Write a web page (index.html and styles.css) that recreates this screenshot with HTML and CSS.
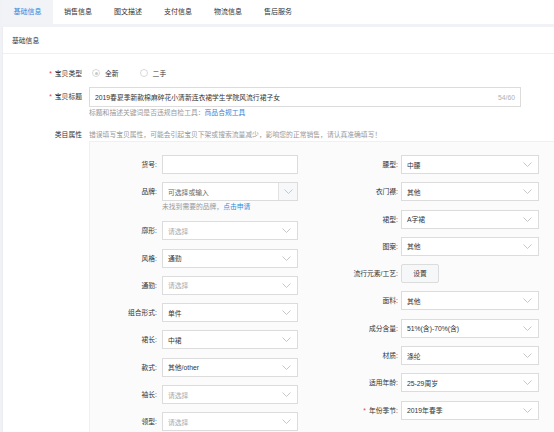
FILE: index.html
```html
<!DOCTYPE html>
<html lang="zh-CN">
<head>
<meta charset="utf-8">
<title>基础信息</title>
<link rel="stylesheet" href="styles.css">
</head>
<body>
<div class="page">
  <div class="tabs">
    <div class="tab active">基础信息</div>
    <div class="tab">销售信息</div>
    <div class="tab">图文描述</div>
    <div class="tab">支付信息</div>
    <div class="tab">物流信息</div>
    <div class="tab">售后服务</div>
  </div>
  <div class="panel">
    <div class="panel-head">基础信息</div>
    <div class="form">
      <div class="row row-type">
        <div class="label"><span class="req">*</span>宝贝类型</div>
        <div class="radios">
          <span class="radio checked"></span><span class="radio-text">全新</span>
          <span class="radio"></span><span class="radio-text">二手</span>
        </div>
      </div>
      <div class="row row-title">
        <div class="label label-input"><span class="req">*</span>宝贝标题</div>
        <div class="field">
          <div class="title-input"><span class="title-text">2019春夏季新款棉麻碎花小清新连衣裙学生学院风流行裙子女</span><span class="count">54/60</span></div>
          <div class="help">标题和描述关键词是否违规自检工具：<span class="link">商品合规工具</span></div>
        </div>
      </div>
      <div class="row row-attr">
        <div class="label label-help">类目属性</div>
        <div class="field grow">
          <div class="help help-top">错误填写宝贝属性，可能会引起宝贝下架或搜索流量减少，影响您的正常销售，请认真准确填写！</div>
          <div class="attr-box">
            <div class="col col-left">
              <div class="item"><div class="ilabel">货号:</div><div class="ctrl input"></div></div>
              <div class="item item-brand">
                <div class="ilabel">品牌:</div>
                <div class="ctrl-wrap">
                  <div class="ctrl combo"><span class="val ph-dark">可选择或输入</span><span class="combo-btn"><svg class="chev" viewBox="0 0 9 5"><polyline points="0.5,0.5 4.5,4.5 8.5,0.5"/></svg></span></div>
                  <div class="brand-help">未找到需要的品牌，<span class="link">点击申请</span></div>
                </div>
              </div>
              <div class="item"><div class="ilabel">廓形:</div><div class="ctrl select"><span class="val ph">请选择</span><svg class="chev" viewBox="0 0 9 5"><polyline points="0.5,0.5 4.5,4.5 8.5,0.5"/></svg></div></div>
              <div class="item"><div class="ilabel">风格:</div><div class="ctrl select"><span class="val">通勤</span><svg class="chev" viewBox="0 0 9 5"><polyline points="0.5,0.5 4.5,4.5 8.5,0.5"/></svg></div></div>
              <div class="item"><div class="ilabel">通勤:</div><div class="ctrl select"><span class="val ph">请选择</span><svg class="chev" viewBox="0 0 9 5"><polyline points="0.5,0.5 4.5,4.5 8.5,0.5"/></svg></div></div>
              <div class="item"><div class="ilabel">组合形式:</div><div class="ctrl select"><span class="val">单件</span><svg class="chev" viewBox="0 0 9 5"><polyline points="0.5,0.5 4.5,4.5 8.5,0.5"/></svg></div></div>
              <div class="item"><div class="ilabel">裙长:</div><div class="ctrl select"><span class="val">中裙</span><svg class="chev" viewBox="0 0 9 5"><polyline points="0.5,0.5 4.5,4.5 8.5,0.5"/></svg></div></div>
              <div class="item"><div class="ilabel">款式:</div><div class="ctrl select"><span class="val">其他/other</span><svg class="chev" viewBox="0 0 9 5"><polyline points="0.5,0.5 4.5,4.5 8.5,0.5"/></svg></div></div>
              <div class="item"><div class="ilabel">袖长:</div><div class="ctrl select"><span class="val ph">请选择</span><svg class="chev" viewBox="0 0 9 5"><polyline points="0.5,0.5 4.5,4.5 8.5,0.5"/></svg></div></div>
              <div class="item"><div class="ilabel">领型:</div><div class="ctrl select"><span class="val ph">请选择</span><svg class="chev" viewBox="0 0 9 5"><polyline points="0.5,0.5 4.5,4.5 8.5,0.5"/></svg></div></div>
            </div>
            <div class="col col-right">
              <div class="item"><div class="ilabel">腰型:</div><div class="ctrl select"><span class="val">中腰</span><svg class="chev" viewBox="0 0 9 5"><polyline points="0.5,0.5 4.5,4.5 8.5,0.5"/></svg></div></div>
              <div class="item"><div class="ilabel">衣门襟:</div><div class="ctrl select"><span class="val">其他</span><svg class="chev" viewBox="0 0 9 5"><polyline points="0.5,0.5 4.5,4.5 8.5,0.5"/></svg></div></div>
              <div class="item"><div class="ilabel">裙型:</div><div class="ctrl select"><span class="val">A字裙</span><svg class="chev" viewBox="0 0 9 5"><polyline points="0.5,0.5 4.5,4.5 8.5,0.5"/></svg></div></div>
              <div class="item"><div class="ilabel">图案:</div><div class="ctrl select"><span class="val">其他</span><svg class="chev" viewBox="0 0 9 5"><polyline points="0.5,0.5 4.5,4.5 8.5,0.5"/></svg></div></div>
              <div class="item"><div class="ilabel">流行元素/工艺:</div><div class="btn">设置</div></div>
              <div class="item"><div class="ilabel">面料:</div><div class="ctrl select"><span class="val">其他</span><svg class="chev" viewBox="0 0 9 5"><polyline points="0.5,0.5 4.5,4.5 8.5,0.5"/></svg></div></div>
              <div class="item"><div class="ilabel">成分含量:</div><div class="ctrl select"><span class="val">51%(含)-70%(含)</span><svg class="chev" viewBox="0 0 9 5"><polyline points="0.5,0.5 4.5,4.5 8.5,0.5"/></svg></div></div>
              <div class="item"><div class="ilabel">材质:</div><div class="ctrl select"><span class="val">涤纶</span><svg class="chev" viewBox="0 0 9 5"><polyline points="0.5,0.5 4.5,4.5 8.5,0.5"/></svg></div></div>
              <div class="item"><div class="ilabel">适用年龄:</div><div class="ctrl select"><span class="val">25-29周岁</span><svg class="chev" viewBox="0 0 9 5"><polyline points="0.5,0.5 4.5,4.5 8.5,0.5"/></svg></div></div>
              <div class="item"><div class="ilabel"><span class="req">*</span>年份季节:</div><div class="ctrl select"><span class="val">2019年春季</span><svg class="chev" viewBox="0 0 9 5"><polyline points="0.5,0.5 4.5,4.5 8.5,0.5"/></svg></div></div>
            </div>
          </div>
        </div>
      </div>
    </div>
  </div>
</div>
</body>
</html>
```
FILE: styles.css
```css
html, body {
  margin: 0;
  padding: 0;
}
body {
  background: #f0f2f5;
  font-family: "Liberation Sans", "Noto Sans CJK SC", sans-serif;
  font-size: 6.8px;
  color: #333;
  width: 554px;
  height: 432px;
  overflow: hidden;
}
.page {
  padding-left: 2px;
}
.tabs {
  display: flex;
  height: 24px;
  background: #fff;
}
.tab {
  width: 50px;
  line-height: 23px;
  text-align: center;
  font-size: 7px;
  color: #333;
}
.tab.active {
  width: 51px;
  background: #f2f3f7;
  color: #3089dc;
}
.panel {
  margin-top: 3px;
  background: #fff;
  height: 405px;
  border-left: 1px solid #ebedf0;
}
.panel-head {
  height: 26px;
  line-height: 27px;
  padding-left: 9px;
  border-bottom: 1px solid #eef0f3;
}
.form {
  padding-top: 12px;
}
.row {
  display: flex;
}
.label {
  width: 79px;
  text-align: right;
  padding-right: 7px;
  flex-shrink: 0;
  color: #333;
}
.req {
  color: #f03c3c;
  margin-right: 3px;
}
.row-type {
  height: 14px;
  align-items: center;
}
.radios {
  display: flex;
  align-items: center;
}
.radio {
  width: 6px;
  height: 6px;
  border: 1px solid #d9d9d9;
  border-radius: 50%;
  background: #fff;
  position: relative;
  margin-left: 3px;
}
.radio.checked::after {
  content: "";
  position: absolute;
  left: 1.5px;
  top: 1.5px;
  width: 3px;
  height: 3px;
  border-radius: 50%;
  background: #c8c8c8;
}
.radio-text {
  margin-left: 5px;
  margin-right: 18px;
}
.row-title {
  margin-top: 7px;
}
.label-input {
  line-height: 20px;
}
.title-input {
  box-sizing: border-box;
  width: 432px;
  height: 20px;
  border: 1px solid #dcdcdc;
  display: flex;
  align-items: center;
  justify-content: space-between;
  padding: 0 5px;
}
.count {
  color: #b0b0b0;
}
.help {
  color: #999;
  line-height: 10px;
  margin-top: 1px;
}
.link {
  color: #3089dc;
}
.row-attr {
  margin-top: 12px;
}
.label-help {
  line-height: 10px;
}
.grow {
  flex: 1;
}
.help-top {
  margin-top: 0;
}
.attr-box {
  margin-top: 1px;
  background: #fbfbfc;
  border: 1px solid #eef0f3;
  border-right: none;
  height: 290px;
  padding-top: 13px;
  display: flex;
}
.col {
  display: flex;
  flex-direction: column;
  gap: 8.3px;
}
.col-left {
  width: 210px;
}
.col-left .ilabel {
  width: 67px;
  margin-right: 5px;
}
.col-right .ilabel {
  width: 98px;
  margin-right: 3px;
}
.item {
  display: flex;
  align-items: flex-start;
}
.ilabel {
  text-align: right;
  line-height: 19px;
  flex-shrink: 0;
  color: #333;
}
.ctrl {
  box-sizing: border-box;
  height: 19px;
  border: 1px solid #dcdcdc;
  background: #fff;
  display: flex;
  align-items: center;
  position: relative;
}
.col-left .ctrl {
  width: 136px;
}
.col-right .ctrl {
  width: 138px;
}
.val {
  padding-left: 5px;
  flex: 1;
  color: #333;
}
.val.ph {
  color: #aaa;
}
.val.ph-dark {
  color: #666;
}
.chev {
  width: 9px;
  height: 5px;
  margin-right: 6px;
  fill: none;
  stroke: #b8b8c0;
  stroke-width: 0.8;
}
.combo-btn {
  align-self: stretch;
  width: 18px;
  border-left: 1px solid #e2e2e2;
  background: #f7f8fa;
  display: flex;
  align-items: center;
  justify-content: center;
}
.combo-btn .chev {
  margin-right: 0;
}
.brand-help {
  color: #999;
  line-height: 10.7px;
  margin-top: 1px;
}
.btn {
  box-sizing: border-box;
  width: 38px;
  height: 19px;
  line-height: 17px;
  text-align: center;
  border: 1px solid #dcdcdc;
  border-radius: 2px;
  background: #f6f7f9;
  color: #333;
}
```
